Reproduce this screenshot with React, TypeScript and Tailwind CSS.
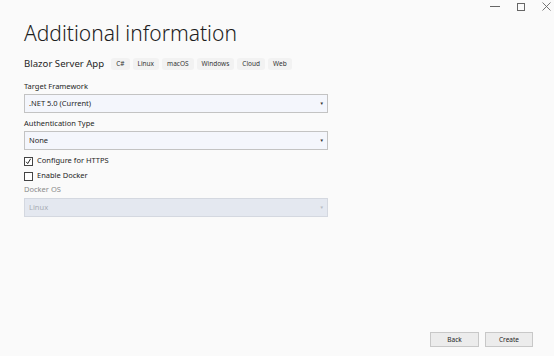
const tags = ["C#", "Linux", "macOS", "Windows", "Cloud", "Web"];

function Dropdown({ value, disabled }: { value: string; disabled?: boolean }) {
  return (
    <div
      className={
        disabled
          ? "w-[304px] h-[19px] border border-[#d4d8e0] bg-[#e4e8f0] flex items-center justify-between pl-[4px] pr-[3px]"
          : "w-[304px] h-[19px] border border-[#c3c3c3] bg-[#f4f6fc] flex items-center justify-between pl-[4px] pr-[3px]"
      }
    >
      <span className={disabled ? "text-[7.5px] text-[#a8acb4]" : "text-[7.5px] text-[#1e1e1e]"}>{value}</span>
      <span className={disabled ? "text-[4.5px] text-[#b8bcc4]" : "text-[4.5px] text-[#333]"}>▼</span>
    </div>
  );
}

function Checkbox({ label, checked }: { label: string; checked?: boolean }) {
  return (
    <div className="flex items-center gap-[4px] h-[12px]">
      <div className="w-[9px] h-[9px] border border-[#444] bg-white flex items-center justify-center">
        {checked && (
          <svg width="7" height="7" viewBox="0 0 7 7">
            <path d="M1.2 3.8 L2.7 5.6 L5.6 0.8" fill="none" stroke="#222" strokeWidth="1" />
          </svg>
        )}
      </div>
      <span className="text-[7.5px] text-[#1e1e1e]">{label}</span>
    </div>
  );
}

export default function App() {
  return (
    <div
      className="w-[554px] h-[356px] bg-[#fafafa] flex flex-col"
      style={{ fontFamily: '"Noto Sans", "Open Sans", sans-serif' }}
    >
      {/* Barra da janela */}
      <div className="flex justify-end items-center h-[13px] pr-[3px] gap-[17px]">
        <div className="w-[10px] h-[1px] bg-[#666]" />
        <div className="w-[8px] h-[8px] border border-[#666]" />
        <svg width="9" height="9" viewBox="0 0 9 9">
          <path d="M0.5 0.5 L8.5 8.5 M8.5 0.5 L0.5 8.5" stroke="#666" strokeWidth="0.9" />
        </svg>
      </div>

      <div className="pl-[24px] flex flex-col">
        <h1 className="text-[21px] font-light text-[#1e1e1e] leading-none mt-[10px]">Additional information</h1>

        <div className="flex items-center mt-[13px] h-[14px]">
          <span className="text-[9.6px] text-[#1e1e1e] mr-[7px]">Blazor Server App</span>
          <div className="flex gap-[3px]">
            {tags.map((t) => (
              <span key={t} className="text-[6.5px] text-[#333] bg-[#f2f2f2] rounded-[3px] px-[5px] h-[12px] flex items-center">
                {t}
              </span>
            ))}
          </div>
        </div>

        <span className="text-[7.5px] text-[#1e1e1e] mt-[10px] h-[11px] leading-[11px]">Target Framework</span>
        <div className="mt-[2px]">
          <Dropdown value=".NET 5.0 (Current)" />
        </div>

        <span className="text-[7.5px] text-[#1e1e1e] mt-[5px] h-[11px] leading-[11px]">Authentication Type</span>
        <div className="mt-[2px]">
          <Dropdown value="None" />
        </div>

        <div className="mt-[5px] flex flex-col gap-[3px]">
          <Checkbox label="Configure for HTTPS" checked />
          <Checkbox label="Enable Docker" />
        </div>

        <span className="text-[7.5px] text-[#8a8a8a] mt-[2px] h-[11px] leading-[11px]">Docker OS</span>
        <div className="mt-[3px]">
          <Dropdown value="Linux" disabled />
        </div>
      </div>

      <div className="mt-auto mb-[9px] flex justify-end gap-[6px] pr-[21px]">
        <button className="w-[49px] h-[15px] border border-[#c8c8c8] bg-[#ececec] text-[6.5px] text-[#1e1e1e]">Back</button>
        <button className="w-[48px] h-[15px] border border-[#c8c8c8] bg-[#ececec] text-[6.5px] text-[#1e1e1e]">Create</button>
      </div>
    </div>
  );
}
